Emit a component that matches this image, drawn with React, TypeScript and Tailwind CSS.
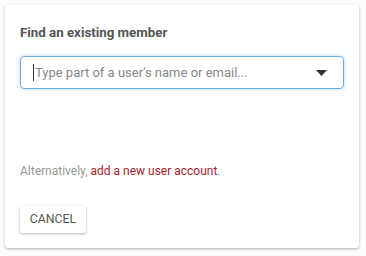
import React from "react";

export default function App() {
  return (
    <div className="w-[366px] h-[256px] bg-[#fcfcfc] pt-[5px] pl-[5px]" style={{ fontFamily: "Roboto, 'Liberation Sans', sans-serif" }}>
      <div className="w-[354px] h-[243px] bg-white rounded-[3px] shadow-[0_1px_3px_rgba(0,0,0,0.3)] flex flex-col px-[15px]">
        <div className="mt-[20px] text-[13.3px] font-bold text-[#555] leading-[15px]">Find an existing member</div>
        <div className="mt-[16px] h-[33px] rounded-[4px] border border-[#66afe9] shadow-[0_0_4px_rgba(102,175,233,0.5)] flex items-center pl-[12px] pr-[16px]">
          <span className="w-px h-[17px] bg-[#333] mr-px"></span>
          <span className="flex-1 text-[13px] text-[#888]">Type part of a user's name or email...</span>
          <svg width="11" height="6" viewBox="0 0 11 6"><path d="M0 0h11L5.5 6z" fill="#333" /></svg>
        </div>
        <div className="mt-[75px] text-[12px] leading-[14px] text-[#999]">
          Alternatively, <span className="text-[#a51c30]">add a new user account</span>.
        </div>
        <div className="mt-[28px]">
          <button className="h-[27px] w-[66px] bg-white rounded-[3px] shadow-[0_1px_3px_rgba(0,0,0,0.3)] text-[12.3px] text-[#555] text-center">CANCEL</button>
        </div>
      </div>
    </div>
  );
}
